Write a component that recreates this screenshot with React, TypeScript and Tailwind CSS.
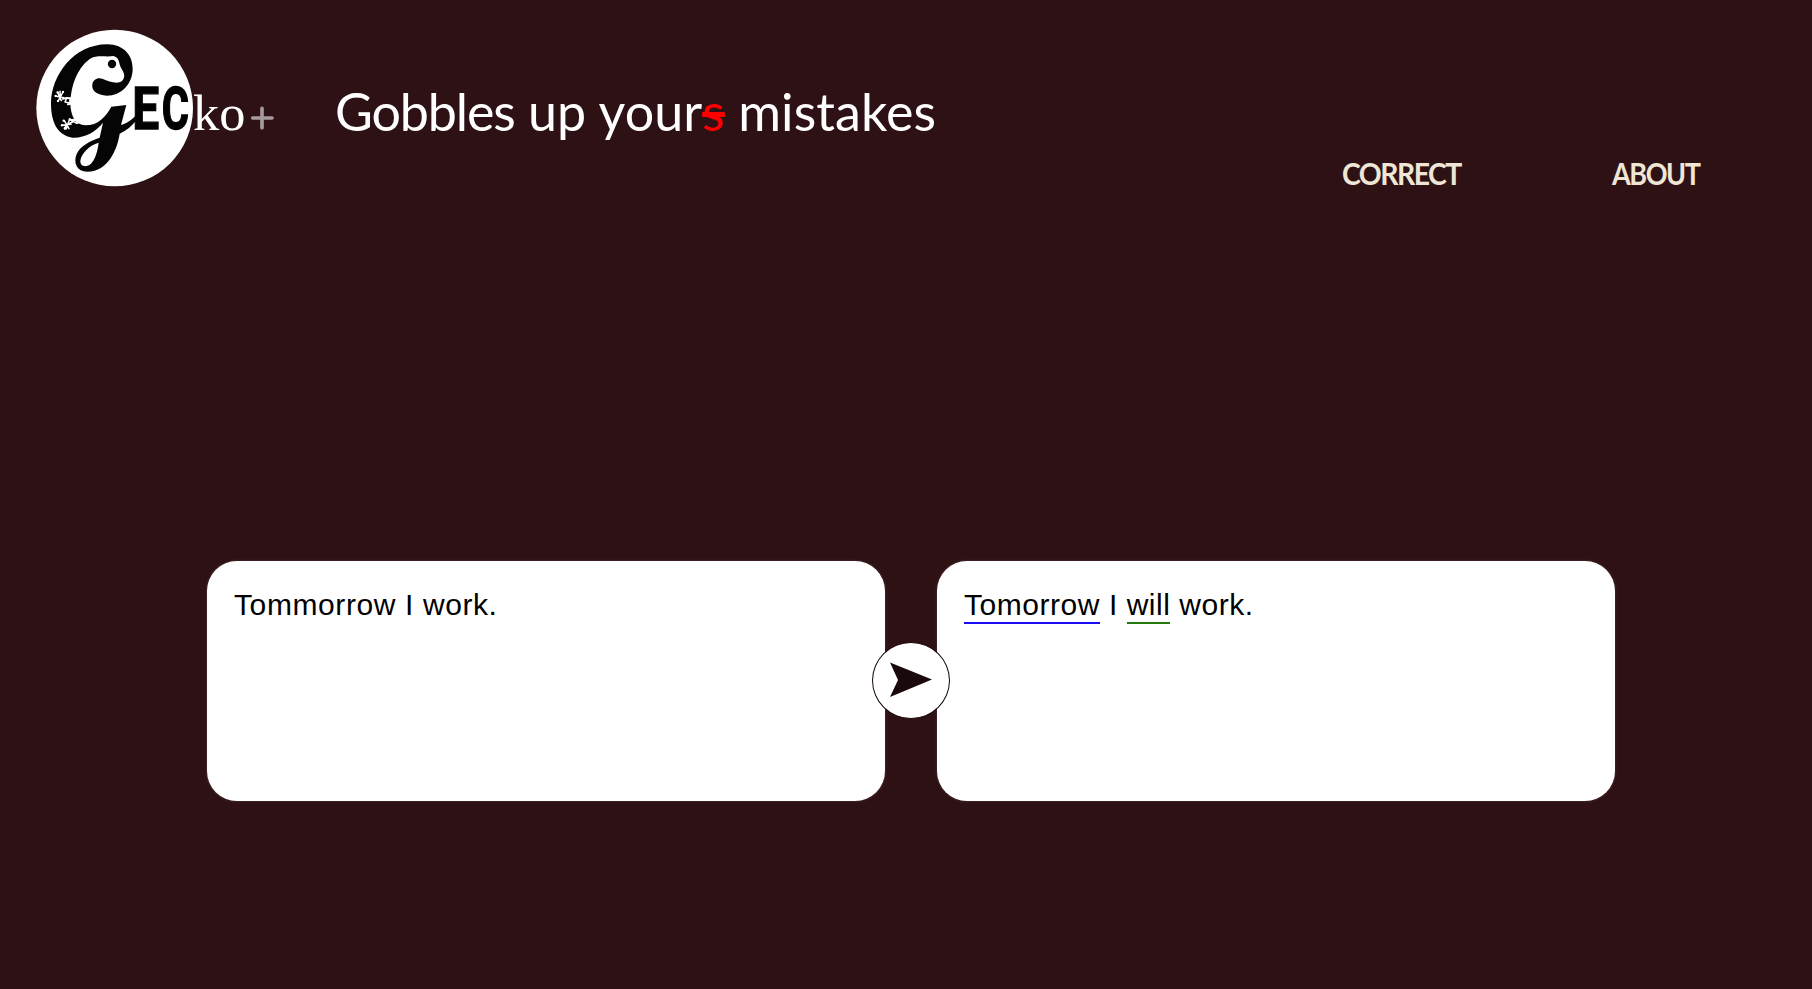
function Logo() {
  return (
    <svg width="280" height="185" viewBox="0 0 840 555" className="block shrink-0" role="img" aria-label="GECko+">
      <circle cx="284" cy="279" r="235" fill="#fff" />
      <path
        fill="#050506"
        fillRule="evenodd"
        d="M217 208C219 193 233 186 247 191C270 200 296 211 309 194C318 180 309 169 303 158C296 146 300 129 281 123C258 127 228 119 209 132C169 162 153 214 151 262C151 303 166 331 196 331C235 331 257 305 274 275L319 270L303 330C323 324 336 313 347 302L347 318C336 333 320 346 299 356C292 402 265 470 202 470C171 470 159 444 170 417C182 391 211 378 239 368L249 323C229 349 193 370 157 368C111 361 93 320 93 265C94 182 160 88 262 88C313 89 338 122 338 161C338 207 303 242 261 242C231 241 214 228 217 208ZM236 383C209 391 184 414 181 438C181 457 202 457 213 446C227 431 233 406 236 383Z"
      />
      <circle cx="276" cy="147" r="12.5" fill="#050506" />
      <g stroke="#fff" strokeWidth="4.5" strokeLinecap="round" strokeLinejoin="round" fill="none">
        <path d="M106 243L132 248M113 232L124 257M129 231L114 259M120 229L121 247M128 252L140 249L135 261L149 264" />
        <path d="M125 331L153 328M133 317L147 341M149 312L139 341M133 340L146 324M147 326L158 321L153 315L170 325" />
        <path d="M139 249L151 250L150 267L144 268M153 315L166 314L173 324" strokeWidth="6" />
      </g>
      <g fill="#fff">
        <circle cx="107" cy="243" r="3.5" /><circle cx="113" cy="232" r="3.5" />
        <circle cx="129" cy="231" r="3.5" /><circle cx="114" cy="258" r="3.5" />
        <circle cx="126" cy="331" r="3.5" /><circle cx="131" cy="317" r="3.5" />
        <circle cx="150" cy="313" r="3.5" /><circle cx="135" cy="341" r="3.5" />
      </g>
      <g fontFamily="Roboto, sans-serif" fontWeight="700" fontSize="176" fill="#000" stroke="#000" strokeWidth="4">
        <text transform="translate(337 342) scale(0.816 1)">E</text>
        <text transform="translate(425 342) scale(0.71 1)">C</text>
      </g>
      <text transform="translate(519 345) scale(1.02 1)" fontFamily="Liberation Serif, serif" fontSize="154" fill="#fff">ko</text>
      <path d="M698 309H756M726 280V338" stroke="#a69a9c" strokeWidth="11" strokeLinecap="round" />
    </svg>
  );
}

export default function App() {
  return (
    <div className="flex h-[989px] w-full flex-col overflow-hidden bg-[#2e1114]">
      <header className="flex h-[215px] items-start pt-[15px] pl-5">
        <Logo />
        <h1 className="mt-[66px] ml-[35px] w-[604px] shrink-0 font-[Lato] text-[52px] leading-[60px] tracking-[0.1px] whitespace-pre text-white">
          <span className="tracking-[-1.15px]">Gobbles</span> up your
          <span className="text-[#f00] line-through decoration-[5px]">s</span> mistakes
        </h1>
        <nav className="mt-[140px] ml-[403px] flex gap-[150px] font-[Lato] text-[30px] leading-[36px] font-bold text-[#efe6d5]">
          <a className="w-[120px] origin-left scale-x-[0.945] tracking-[-1.6px]">CORRECT</a>
          <a className="w-[90px] origin-left scale-x-[0.9] tracking-[-1.6px]">ABOUT</a>
        </nav>
      </header>

      <main className="mt-[346px] ml-[207px] flex h-[240px] items-center font-['Liberation_Sans'] text-[30px] leading-[36px] text-black">
        <section className="h-full w-[678px] rounded-[30px] bg-white px-[27px] pt-[26px] shadow-[0_0_3px_#55383b]">
          <p className="tracking-[0.6px]">Tommorrow I work.</p>
        </section>
        <button className="z-10 -mx-[13px] -mt-px flex h-[77px] w-[78px] shrink-0 items-center justify-center rounded-[50%] border border-[#1a080b] bg-white">
          <svg width="42" height="36" viewBox="0 0 42 36" className="-mt-px">
            <path d="M0 0.5L42 17.5L0 35L8 18Z" fill="#1a080b" />
          </svg>
        </button>
        <section className="h-full w-[678px] rounded-[30px] bg-white px-[27px] pt-[26px] shadow-[0_0_3px_#55383b]">
          <p className="tracking-[0.54px]">
            <span className="border-b-2 border-[#1b0cf5] pb-px">Tomorrow</span> I{" "}
            <span className="border-b-2 border-[#247b0b] pb-px">will</span> work.
          </p>
        </section>
      </main>
    </div>
  );
}
